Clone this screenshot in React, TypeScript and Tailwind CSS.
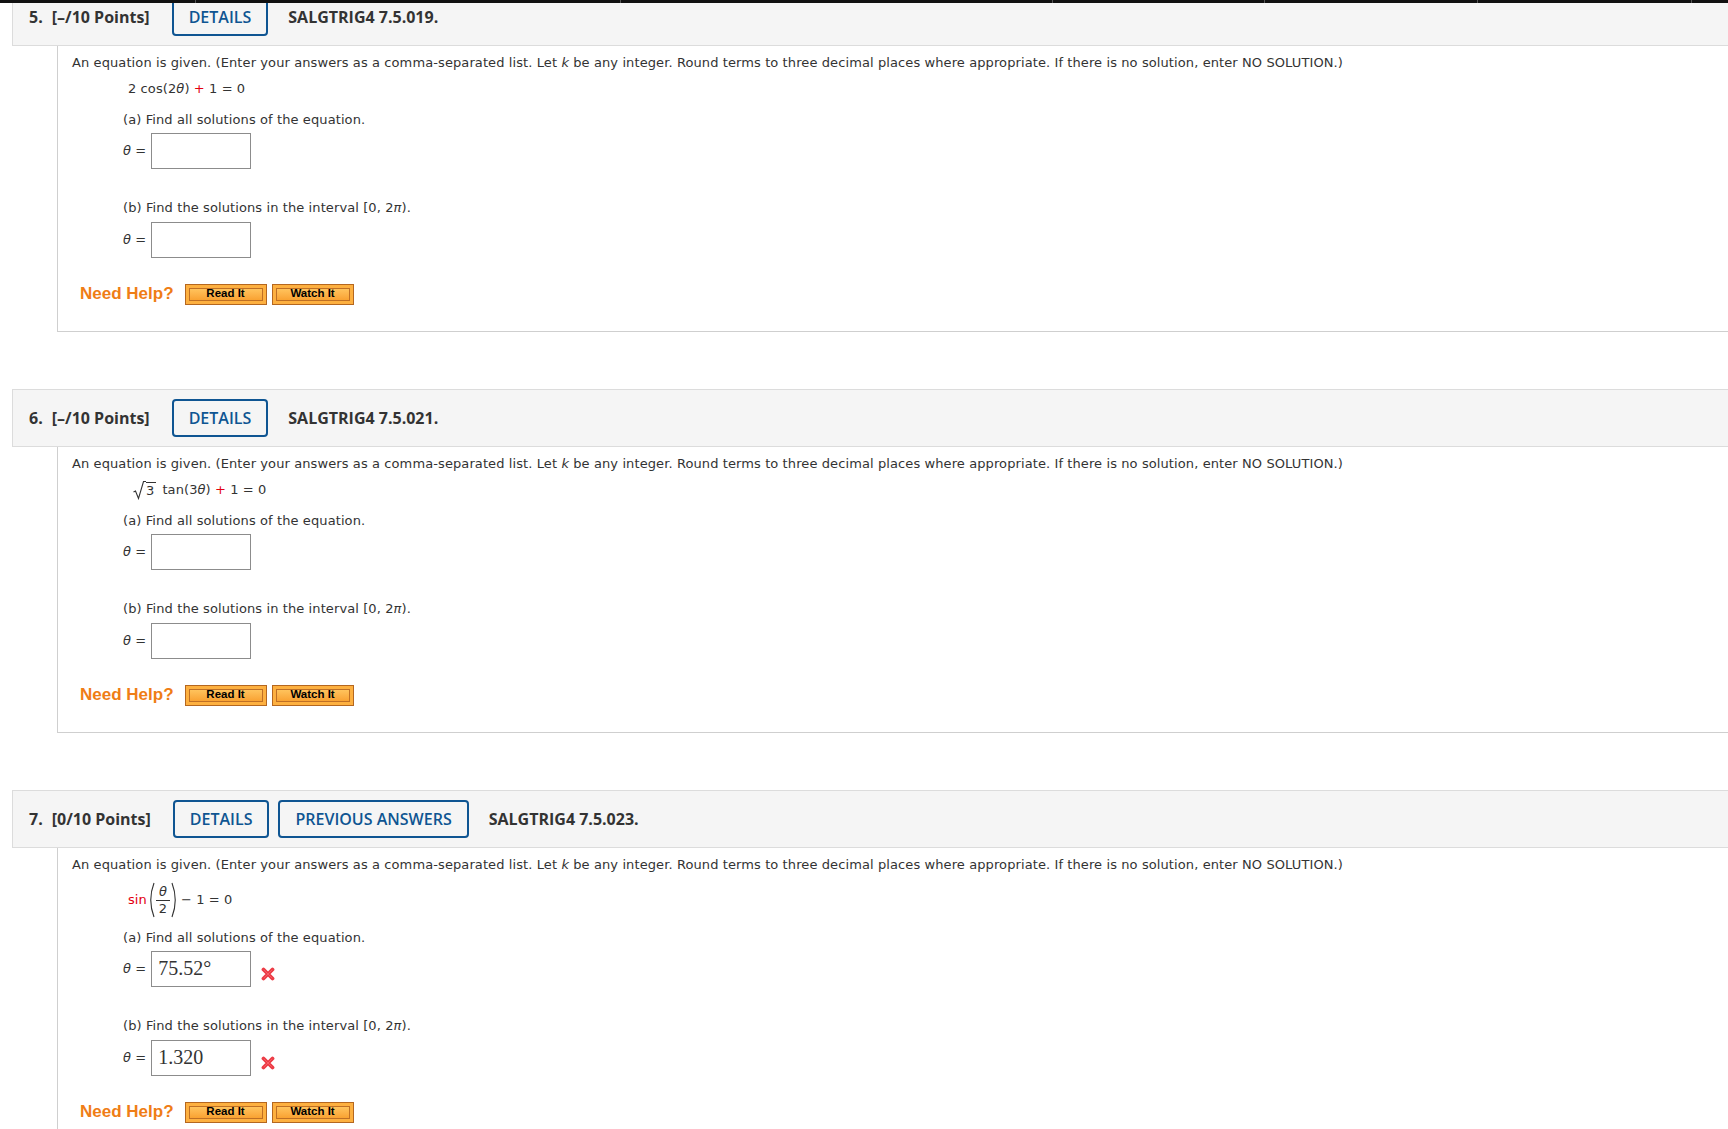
import React from "react";

const body = { fontFamily: '"DejaVu Sans", Verdana, sans-serif' } as React.CSSProperties;
const head = { fontFamily: '"Open Sans", sans-serif' } as React.CSSProperties;
const arial = { fontFamily: '"Liberation Sans", Arial, sans-serif' } as React.CSSProperties;
const serif = { fontFamily: '"Liberation Serif", "Times New Roman", serif' } as React.CSSProperties;

function RedX() {
  return (
    <svg width="14" height="14" viewBox="0 0 14 14" className="ml-[10px] mt-[9px]">
      <path d="M2.5 2.5 L11.5 11.5 M11.5 2.5 L2.5 11.5" stroke="#ec3a44" strokeWidth="3.8" strokeLinecap="round" />
      <path d="M3 3 L11 11 M11 3 L3 11" stroke="#ff8088" strokeWidth="0.9" strokeLinecap="round" opacity="0.55" />
    </svg>
  );
}

function AnswerRow({ value, wrong }: { value?: string; wrong?: boolean }) {
  return (
    <div className="flex items-center h-[36px]">
      <span className="text-[13px] text-[#333]" style={body}>
        <i>θ</i> =
      </span>
      <div className="ml-[5px] w-[100px] h-[36px] border border-[#8c8c8c] bg-white flex items-center pl-[6px] pb-[2px]">
        {value && (
          <span className="text-[20px] text-[#333] leading-none tracking-normal" style={serif}>
            {value}
          </span>
        )}
      </div>
      {wrong && <RedX />}
    </div>
  );
}

function HelpButton({ label }: { label: string }) {
  return (
    <div className="w-[82px] h-[21px] border border-[#b5671f] bg-[#fdb040] p-[3px]">
      <div
        className="h-full border border-[#bf6f24] bg-gradient-to-b from-[#ffc35c] to-[#f9a231] flex items-center justify-center text-[11.5px] font-bold text-black leading-none tracking-normal"
        style={arial}
      >
        {label}
      </div>
    </div>
  );
}

function Plus() {
  return <span className="text-[#e3000f]">+</span>;
}

function Question({
  num,
  points,
  prev,
  code,
  eq,
  tall,
  answers,
  first,
}: {
  num: string;
  points: string;
  prev?: boolean;
  code: string;
  eq: React.ReactNode;
  tall?: boolean;
  answers?: [string, string];
  first?: boolean;
}) {
  return (
    <div className={first ? "" : "mt-[57px]"}>
      <div
        className="h-[58px] border border-r-0 border-[#dcdcdc] bg-[#f5f5f5] flex items-center pl-[16px] text-[16px] text-[#333]"
        style={head}
      >
        <span className="font-bold">{num}</span>
        <span className="font-bold ml-[9px]">{points}</span>
        <div className="ml-[22px] h-[38px] px-[15px] border-2 border-[#0f5592] rounded-[4px] flex items-center text-[#0f5592] font-semibold">
          DETAILS
        </div>
        {prev && (
          <div className="ml-[9px] h-[38px] px-[15px] border-2 border-[#0f5592] rounded-[4px] flex items-center text-[#0f5592] font-semibold">
            PREVIOUS ANSWERS
          </div>
        )}
        <span className="font-bold ml-[20px]">{code}</span>
      </div>
      <div
        className="ml-[45px] border-l border-b border-[#cfcfcf] pl-[14px] pt-[8px] pb-[26px] text-[13px] text-[#333] tracking-[0.1px]"
        style={body}
      >
        <div className="h-[18px] leading-[18px] whitespace-nowrap">
          An equation is given. (Enter your answers as a comma-separated list. Let <i>k</i> be any integer. Round
          terms to three decimal places where appropriate. If there is no solution, enter NO SOLUTION.)
        </div>
        <div className="ml-[51px]">
          <div className={`ml-[5px] mt-[8px] flex items-center whitespace-nowrap ${tall ? "h-[36px]" : "h-[18px]"}`}>
            {eq}
          </div>
          <div className={`${tall ? "mt-[11px]" : "mt-[13px]"} h-[18px] leading-[18px]`}>
            (a) Find all solutions of the equation.
          </div>
          <div className="mt-[4px]">
            <AnswerRow value={answers?.[0]} wrong={!!answers} />
          </div>
          <div className="mt-[30px] h-[18px] leading-[18px]">
            (b) Find the solutions in the interval [0, 2<i>π</i>).
          </div>
          <div className="mt-[5px]">
            <AnswerRow value={answers?.[1]} wrong={!!answers} />
          </div>
        </div>
        <div className="mt-[25px] ml-[8px] h-[22px] flex items-center">
          <span className="text-[17px] font-bold text-[#ef7d16] tracking-normal" style={arial}>
            Need Help?
          </span>
          <div className="ml-[11px]">
            <HelpButton label="Read It" />
          </div>
          <div className="ml-[5px]">
            <HelpButton label="Watch It" />
          </div>
        </div>
      </div>
    </div>
  );
}

export default function App() {
  const eq5 = (
    <span>
      2 cos(2<i>θ</i>) <Plus /> 1 = 0
    </span>
  );
  const eq6 = (
    <span className="flex items-center">
      <svg width="13" height="20" viewBox="0 0 13 20" className="ml-[5px]">
        <path d="M0.5 12 L2.5 11 L5.5 18.5 L10.5 1.5 L13 1.5" stroke="#333" strokeWidth="1.1" fill="none" />
      </svg>
      <span className="border-t border-[#333] mt-[1px] pr-[2px] leading-[16px]">3</span>
      <span className="ml-[6px]">
        tan(3<i>θ</i>) <Plus /> 1 = 0
      </span>
    </span>
  );
  const eq7 = (
    <span className="flex items-center">
      <span className="text-[#e3000f]">sin</span>
      <svg width="7" height="36" viewBox="0 0 7 36" className="ml-[1px]">
        <path d="M6 1 Q-0.5 18 6 35" stroke="#333" strokeWidth="1.1" fill="none" />
      </svg>
      <span className="inline-flex flex-col items-center mx-[1px]">
        <i className="text-[13px] leading-[16px]">θ</i>
        <span className="w-[14px] border-t border-[#333]" />
        <span className="text-[13px] leading-[16px]">2</span>
      </span>
      <svg width="7" height="36" viewBox="0 0 7 36">
        <path d="M1 1 Q7.5 18 1 35" stroke="#333" strokeWidth="1.1" fill="none" />
      </svg>
      <span className="ml-[3px]">− 1 = 0</span>
    </span>
  );

  return (
    <div className="relative w-full h-[1129px] overflow-hidden bg-white">
      <div className="absolute top-0 left-0 right-0 h-[3px] bg-[#111] z-10">
        <div className="absolute top-0 left-[195px] w-px h-[3px] bg-[#555]" />
        <div className="absolute top-0 left-[620px] w-px h-[3px] bg-[#555]" />
        <div className="absolute top-0 left-[1052px] w-px h-[3px] bg-[#555]" />
        <div className="absolute top-0 left-[1264px] w-px h-[3px] bg-[#555]" />
        <div className="absolute top-0 left-[1477px] w-px h-[3px] bg-[#555]" />
        <div className="absolute top-0 left-[1691px] w-px h-[3px] bg-[#555]" />
      </div>
      <div className="pl-[12px] mt-[-12px]">
        <Question first num="5." points="[–/10 Points]" code="SALGTRIG4 7.5.019." eq={eq5} />
        <Question num="6." points="[–/10 Points]" code="SALGTRIG4 7.5.021." eq={eq6} />
        <Question
          num="7."
          points="[0/10 Points]"
          prev
          code="SALGTRIG4 7.5.023."
          eq={eq7}
          tall
          answers={["75.52°", "1.320"]}
        />
      </div>
    </div>
  );
}
